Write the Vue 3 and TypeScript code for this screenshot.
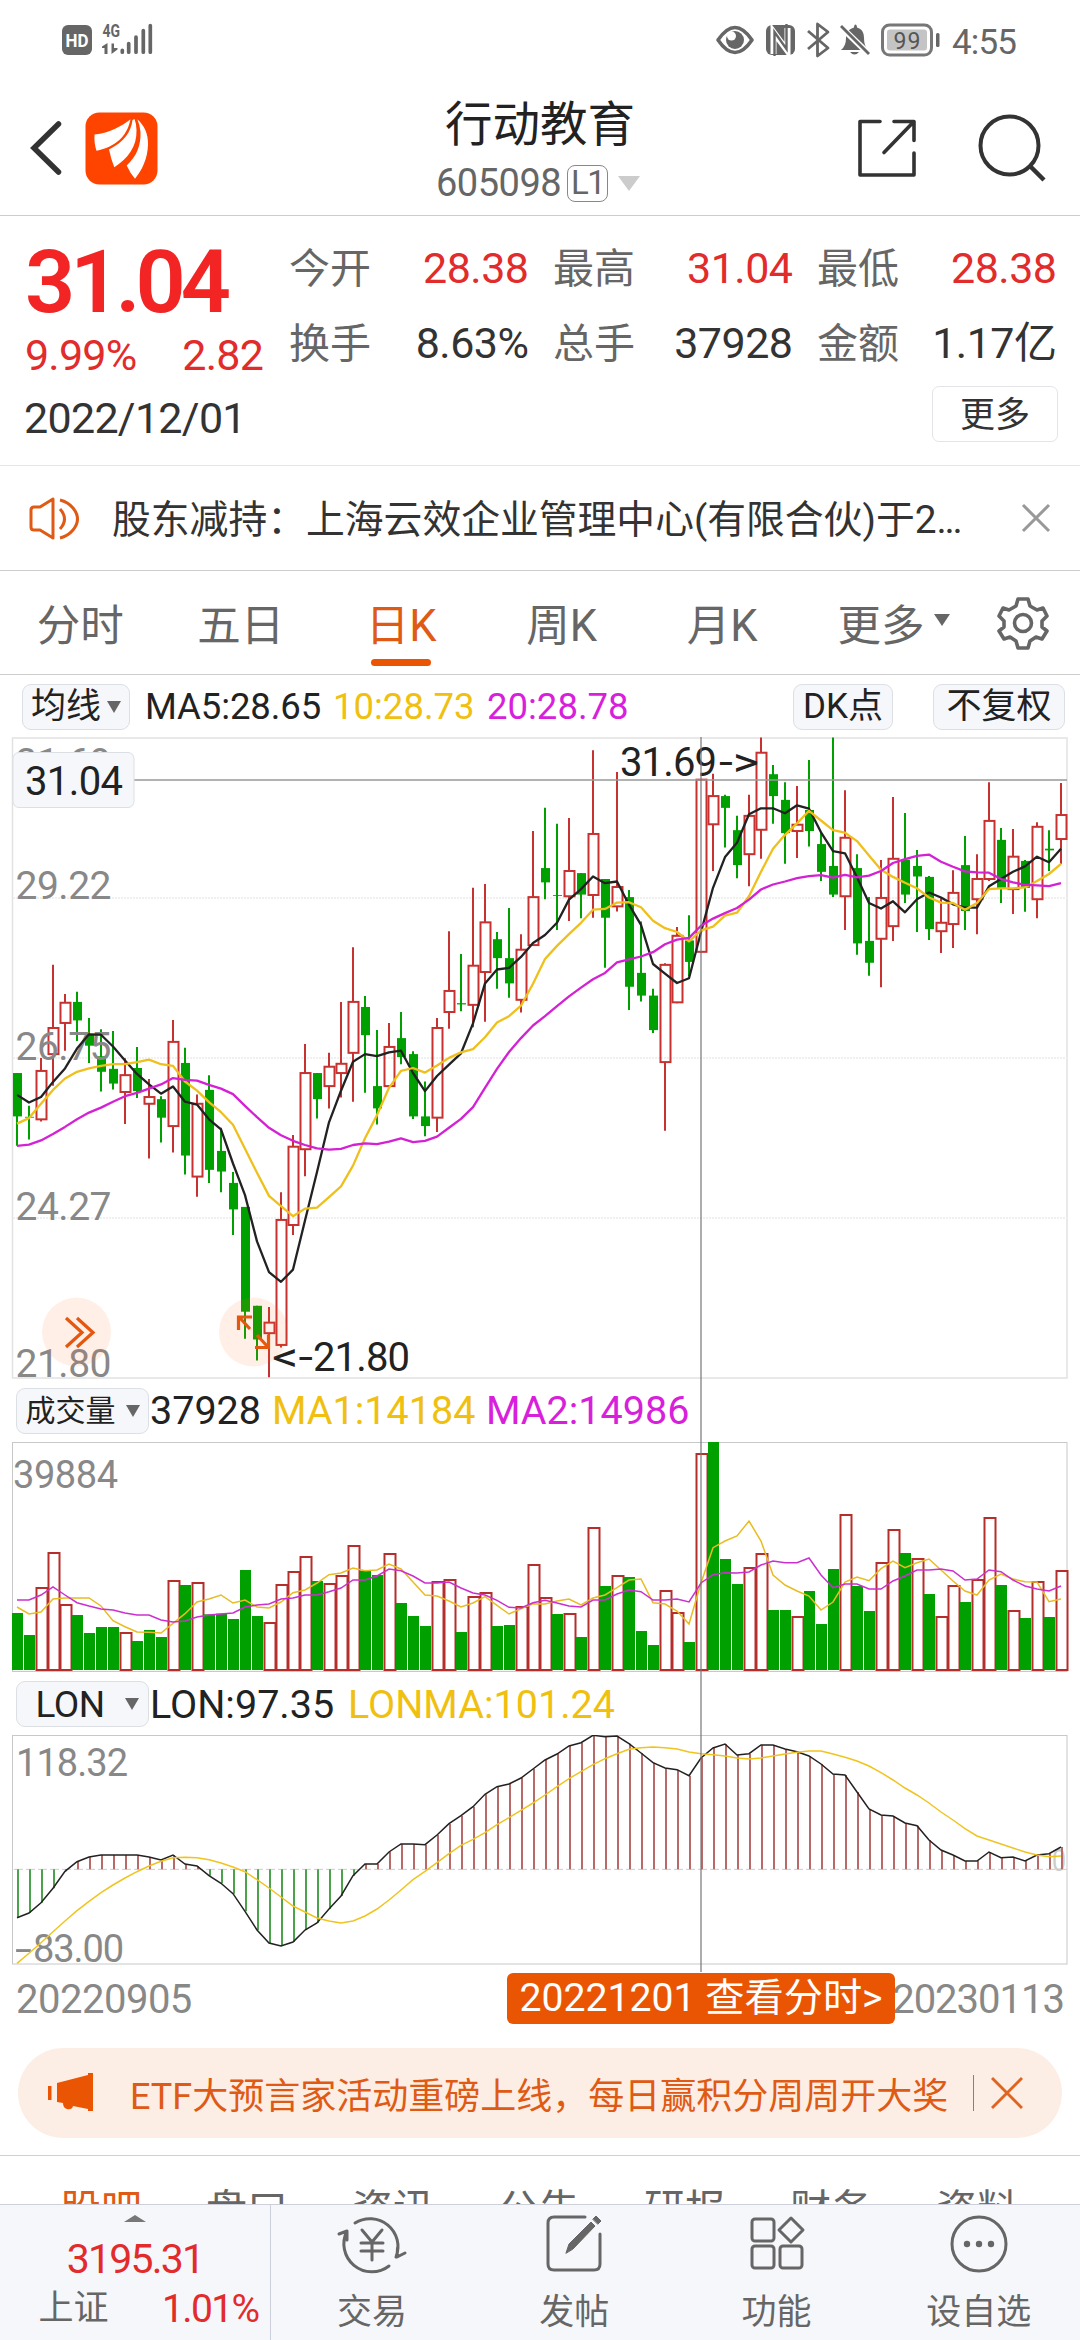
<script setup lang="ts">
interface Candle { up: boolean; x: number; top: number; bottom: number; high: number; low: number }
interface Bar { up: boolean; x: number; top: number }

const STEP = 12
const FIRST_X = 17
const xAt = (i: number) => FIRST_X + i * STEP

// Vertical scales of the panels: stored units -> px from the panel top
const priceY = (v: number) => v / 2.3758 - 7
const volumeY = (v: number) => v / 3 - 62
const lonY = (v: number) => v / 3 - 65

// direction, body top, body bottom, high, low
const rawCandles = `g 815 918 815 988|g 919 921 893 973|r 810 925 779 930|r 708 770 558 845|r 648 696 627 762|g 646 690 622 739|g 722 750 684 791|g 775 812 711 859|g 805 840 715 854|r 820 860 780 936|g 803 858 753 874|r 872 888 829 1018|g 877 921 870 980|r 741 941 689 1004|g 791 1011 755 1056|r 888 1061 866 1109|g 855 1045 820 1076|g 1000 1049 945 1098|g 1076 1139 1050 1200|g 1133 1382 1133 1446|g 1368 1448 1368 1498|r 1408 1433 1371 1538|r 1164 1461 1098 1467|r 990 1176 962 1200|r 815 996 746 1060|g 815 877 815 923|r 800 846 767 899|r 793 815 646 873|r 646 767 516 883|g 658 725 632 862|g 846 899 713 937|r 753 846 696 848|g 732 777 670 794|g 770 918 763 924|g 918 941 835 965|r 708 921 684 955|r 620 670 478 710|g 649 652 532 668|r 560 653 375 706|r 457 575 366 693|g 497 542 480 615|g 542 602 423 636|r 522 641 485 671|r 397 511 240 511|g 328 362 185 402|g 392 394 223 475|r 335 395 209 454|g 340 391 340 447|r 247 392 48 446|g 354 446 354 565|r 373 419 100 431|g 397 610 380 665|g 577 631 455 645|g 631 713 615 720|r 558 789 554 952|r 489 647 468 649|g 500 551 440 585|r 118 527 118 530|r 157 224 104 335|g 157 185 154 279|g 238 321 204 352|r 204 295 154 371|r 54 237 18 306|g 105 157 83 223|g 166 245 124 318|r 225 240 133 304|g 190 240 71 277|g 271 337 245 359|g 323 391 18 397|r 256 395 143 475|g 328 507 295 534|g 501 553 397 584|r 399 496 309 611|r 306 466 159 501|g 308 391 197 411|g 323 348 285 480|g 349 473 347 499|r 458 478 400 530|r 387 461 333 518|g 321 430 252 475|r 354 402 295 485|r 216 354 124 359|g 261 375 233 411|r 301 378 235 437|g 311 375 309 432|r 230 402 219 447|g 282 286 238 335|r 202 259 126 318`

const candles: Candle[] = rawCandles.split('|').map((row, i) => {
  const [dir, ...v] = row.split(' ')
  const [top, bottom, high, low] = v.map((n) => priceY(Number(n)))
  return { up: dir === 'r', x: xAt(i), top, bottom, high, low }
})

const rawVolume = 'g699 g765 r621 r516 r672 g705 g759 g741 g741 r756 g783 g750 g771 r600 g615 r606 g703 g701 g717 g570 g708 r726 r612 r573 r528 g603 r609 r585 r495 g572 g585 r519 g669 g708 g738 r603 r597 g756 r648 r636 g738 g735 r678 r552 r651 g702 r699 g771 r441 g618 r585 g591 g753 g795 r630 r696 g786 r219 g186 g537 g612 r561 r519 g690 g690 r708 g633 g732 g567 r402 g618 g693 r546 r447 g519 r534 g642 r708 r615 g666 r597 r411 g615 r690 g714 r603 g711 r570'
const volumes: Bar[] = rawVolume.split(' ').map((s, i) => ({ up: s[0] === 'r', x: xAt(i), top: volumeY(Number(s.slice(1))) }))

const line = (values: number[], y: (v: number) => number) =>
  values.map((v, i) => `${xAt(i)},${y(v).toFixed(1)}`).join(' ')

const ma5 = line([867,885,872,836,804,757,723,724,752,785,817,842,864,847,883,890,925,949,1030,1105,1215,1288,1311,1282,1165,1050,932,857,788,770,775,766,762,815,858,822,795,768,697,602,569,565,539,506,487,458,403,378,348,364,360,415,463,556,579,601,590,480,375,302,268,200,186,186,198,179,187,243,288,293,350,411,424,407,433,402,386,398,414,422,422,371,354,337,324,301,314,282], priceY)
const ma10 = line([935,922,888,855,828,812,804,798,794,794,789,783,794,798,835,857,884,908,938,995,1052,1107,1131,1155,1137,1135,1110,1084,1035,970,915,850,810,803,814,797,779,766,758,730,695,680,655,603,544,513,485,458,427,425,410,409,421,453,471,480,502,476,467,441,434,395,337,282,249,222,192,215,238,244,264,298,332,349,363,376,398,410,411,427,411,378,376,376,374,359,342,318], priceY)
const ma20 = line([988,985,975,960,943,925,909,897,883,870,862,852,842,827,831,833,843,852,865,893,920,945,963,976,986,994,997,995,986,982,984,978,970,979,976,966,945,924,896,850,805,765,732,702,680,656,633,612,592,577,552,545,538,528,509,498,494,465,448,435,423,403,379,367,360,352,347,345,351,344,350,346,335,316,307,299,296,313,325,336,338,339,354,362,368,369,371,364], priceY)

const volMa1 = line([681,702,696,657,654,654,654,678,722,740,756,757,759,730,701,666,657,645,669,660,681,684,666,638,630,609,584,579,564,572,570,552,567,606,645,648,663,681,669,650,676,702,686,671,672,663,657,675,654,645,623,600,597,668,672,693,732,609,503,483,468,423,483,585,615,633,648,690,666,606,591,602,566,543,563,548,537,570,603,633,645,600,582,597,605,606,665,657], volumeY)
const volMa2 = line([660,660,645,621,645,668,678,687,690,699,705,705,720,726,723,711,705,702,699,681,675,672,657,654,645,645,635,624,600,600,588,567,572,588,609,609,606,624,639,645,661,682,684,668,661,669,678,681,660,660,642,630,635,660,660,657,666,609,584,578,579,576,555,543,548,548,534,585,623,612,612,627,627,603,588,570,570,567,573,600,597,570,575,600,618,627,633,618], volumeY)

const lonValues = [743,729,698,655,604,575,561,555,555,555,555,561,570,555,582,588,617,640,671,724,780,819,828,816,780,759,717,678,617,582,582,546,522,522,524,495,461,437,410,373,350,342,324,297,270,252,228,218,196,200,198,221,249,278,294,299,317,264,234,222,255,251,225,225,237,245,258,282,312,315,366,417,435,438,459,467,510,540,555,573,573,546,563,561,573,555,551,531]
const lon = line(lonValues, lonY)
const lonBars: Bar[] = lonValues.map((v, i) => ({ up: v < 598, x: xAt(i) + 1, top: lonY(v) }))
const lonMa = line([880,850,818,785,753,722,694,668,645,624,605,588,574,563,562,563,569,579,591,605,629,654,681,708,726,744,753,759,753,738,717,690,660,629,604,578,551,526,508,488,464,443,421,399,375,350,326,305,284,266,251,238,233,231,233,237,246,251,254,258,264,267,264,258,252,247,243,243,252,262,273,288,308,330,354,375,399,426,450,476,498,510,522,534,546,555,560,558], lonY)
const zero = lonY(598)

const quotes = [
  { label: '今开', value: '28.38', red: true },
  { label: '最高', value: '31.04', red: true },
  { label: '最低', value: '28.38', red: true },
  { label: '换手', value: '8.63%', red: false },
  { label: '总手', value: '37928', red: false },
  { label: '金额', value: '1.17亿', red: false },
]
const periods = ['分时', '五日', '日K', '周K', '月K']
const sections = ['股吧', '盘口', '资讯', '公告', '研报', '财务', '资料']
const priceLabels = [
  { text: '31.69', y: 39 },
  { text: '29.22', y: 162 },
  { text: '26.75', y: 323 },
  { text: '24.27', y: 483 },
  { text: '21.80', y: 639.5 },
]
</script>

<template>
  <div class="screen">
    <div class="status">
      <svg class="status-left" width="100" height="36" viewBox="60 23 100 36">
        <rect x="62" y="26" width="30" height="30" rx="6" fill="#666" />
        <text x="77" y="48" text-anchor="middle" font-size="18" font-weight="700" fill="#fff" textLength="23" lengthAdjust="spacingAndGlyphs">HD</text>
        <text x="102.500" y="38" font-size="18" font-weight="700" fill="#666" textLength="17.500" lengthAdjust="spacingAndGlyphs">4G</text>
        <path d="M107.500 44v11h-3v-6h-2.500v-1.500zM111.500 44.500h2.500v4.500h3.500v1.500l-6 4.500z" fill="#666" />
        <path d="M122.300 53.200v-1.900M128.700 53.200V44.500M136 53.200V38M143.300 53.200V31.500M150.300 53.200V26.500" stroke="#666" stroke-width="3.700" stroke-linecap="round" />
      </svg>
      <svg class="status-right" width="310" height="38" viewBox="714 22 310 38">
        <path d="M718 40q17-25 34 0q-17 25-34 0z" fill="none" stroke="#666" stroke-width="3.600" stroke-linejoin="round" />
        <circle cx="735" cy="40" r="9" fill="#666" /><circle cx="731.500" cy="36" r="4.500" fill="#fff" />
        <rect x="766" y="25" width="29" height="30" rx="6" fill="#666" />
        <path d="M773.500 54V32l14 19V28" fill="none" stroke="#fff" stroke-width="6" />
        <path d="M774.500 56V32l12 17V24" fill="none" stroke="#666" stroke-width="2.400" />
        <path d="M808 31l20 17-10.500 8V24l10.500 8-20 17" fill="none" stroke="#666" stroke-width="2.800" stroke-linejoin="round" />
        <path d="M841 50q5-4 5-12c0-6 3-9 8-10.500 0-4 3-4 3 0 5 1.500 7 5 7 10.500q0 8 4 12zM850 52h9q-4.500 5-9 0z" fill="#666" />
        <path d="M841 27l28 27" stroke="#fff" stroke-width="6" /><path d="M841 26l28 28" stroke="#666" stroke-width="2.800" />
        <rect x="882.500" y="25" width="49" height="30" rx="7" fill="none" stroke="#777" stroke-width="3" />
        <rect x="887" y="29.500" width="40" height="21" rx="3" fill="#c4c4c4" />
        <rect x="936" y="33" width="3.500" height="14" rx="1.500" fill="#666" />
        <text x="907" y="48.500" text-anchor="middle" font-size="23" fill="#555" textLength="27">99</text>
        <text x="952" y="54" font-size="35" fill="#666" textLength="65">4:55</text>
      </svg>
    </div>

    <header class="header">
      <svg class="brand" width="142" height="76" viewBox="18 110 142 76">
        <path d="M58.500 124L34 148l24.500 24" fill="none" stroke="#333" stroke-width="5.500" stroke-linecap="round" />
        <rect x="85.500" y="112.500" width="72" height="72" rx="14" fill="#ff4400" />
        <path d="M94.500 134.500C110 133 122 126 130.500 119.300C127 137 115 147 96.500 150.700Q94 144 94.500 134.500z" fill="#fff" />
        <path d="M132.500 120C131 132 124 142 109 149.500Q111 159 114.300 167.300C128 158 137 147 136.500 130Q136.500 124 134.500 119z" fill="#fff" />
        <path d="M137.300 119.300C144 125 148.500 134 148 145C147.500 159 142 170 135 178.700Q130 173 126.700 165.500C137 156 141 145 140.500 132Q140 125 137.300 119.300z" fill="#fff" />
      </svg>
      <div class="title">
        <div class="name">行动教育</div>
        <div class="code"><span>605098</span><span class="level">L1</span><i class="tri code-tri"></i></div>
      </div>
      <svg class="tools" width="194" height="72" viewBox="856 112 194 72">
        <path d="M880 121.500H860v53.500h54v-22M894 121.500h20v19M913 122.500l-29 30" fill="none" stroke="#333" stroke-width="3.600" stroke-linejoin="round" stroke-linecap="round" />
        <circle cx="1009.500" cy="145.500" r="29" fill="none" stroke="#333" stroke-width="4" />
        <path d="M1030 166l14 14" stroke="#333" stroke-width="4.500" />
      </svg>
    </header>

    <section class="quote">
      <div class="price-col">
        <div class="price">31.04</div>
        <div class="change"><span>9.99%</span><span>2.82</span></div>
      </div>
      <div class="quote-grid">
        <div v-for="q in quotes" :key="q.label" class="cell">
          <span class="label">{{ q.label }}</span><span class="value" :class="{ red: q.red }">{{ q.value }}</span>
        </div>
      </div>
      <div class="date-row"><span>2022/12/01</span><button class="more">更多</button></div>
    </section>

    <section class="notice">
      <svg width="52" height="46" viewBox="28 494 52 46" fill="none" stroke="#df5a14" stroke-width="3">
        <path d="M53 498v39l-13-8h-6q-3 0-3-3v-17q0-3 3-3h6z" stroke-linejoin="round" />
        <path d="M60 508q9 10 0 20M60 499q8 2 13 8 9 11 0 22-5 6-13 8" />
      </svg>
      <p>股东减持：上海云效企业管理中心(有限合伙)于2<span>...</span></p>
      <svg width="30" height="30" viewBox="0 0 30 30"><path d="M2 2l26 26M28 2L2 28" stroke="#999" stroke-width="3" /></svg>
    </section>

    <nav class="periods">
      <span v-for="p in periods" :key="p" class="period" :class="{ active: p === '日K' }">{{ p }}</span>
      <span class="period-more">更多<i class="tri"></i></span>
      <svg width="54" height="54" viewBox="-27 -27 54 54" fill="none" stroke="#666" stroke-width="3.600" stroke-linejoin="round">
        <path d="M-5-24H5L7-17L14-13L20-15L24-7L19-2V4L24 8L19 16L13 14L7 18L5 25H-5L-7 18L-13 14L-19 16L-24 8L-19 4V-2L-24-7L-20-15L-14-13L-7-17Z" />
        <circle r="8.500" />
      </svg>
    </nav>

    <section class="charts">
      <div class="legend main-legend">
        <button class="chip avg">均线<i class="tri"></i></button>
        <span class="ink ma5">MA5:28.65</span><span class="gold ma10">10:28.73</span><span class="pink">20:28.78</span>
        <button class="chip dk">DK点</button><button class="chip">不复权</button>
      </div>
      <svg class="panel" width="1080" height="642" viewBox="0 0 1080 642">
        <rect x="12.500" y="1" width="1054.500" height="640" fill="none" stroke="#e2e2e2" stroke-width="1.500" />
        <path d="M13 161H1067M13 321H1067M13 481H1067" stroke="#ececec" stroke-width="1.500" stroke-dasharray="2 1" />
        <g v-for="c in candles" :key="c.x">
          <template v-if="c.up">
            <path :d="`M${c.x} ${c.high}V${c.top}M${c.x} ${c.bottom}V${c.low}`" class="up" />
            <rect :x="c.x - 4.500" :y="c.top" width="10" :height="c.bottom - c.top" class="up" />
          </template>
          <template v-else>
            <path :d="`M${c.x} ${c.high}V${c.low}`" class="down" />
            <rect :x="c.x - 4" :y="c.top" width="9" :height="c.bottom - c.top" fill="#00a000" />
          </template>
        </g>
        <g font-size="39" fill="#888">
          <text v-for="p in priceLabels" :key="p.text" x="15.500" :y="p.y" textLength="96">{{ p.text }}</text>
        </g>
        <g fill="none" stroke-width="2.300" stroke-linejoin="round">
          <polyline :points="ma5" stroke="#222" />
          <polyline :points="ma10" stroke="#efc01c" />
          <polyline :points="ma20" stroke="#d321d3" />
        </g>
        <path d="M134 43H1067" stroke="#999" stroke-width="1.600" />
        <rect x="13" y="15.500" width="121" height="55" rx="6" fill="#f6f7fa" stroke="#dcdfe3" />
        <g font-size="40" fill="#222">
          <text x="25" y="57.500" textLength="98">31.04</text>
          <text x="620" y="38.500" textLength="97">31.69</text><text x="719" y="38.500" textLength="40" lengthAdjust="spacingAndGlyphs">-&gt;</text>
          <text x="272" y="634" textLength="41" lengthAdjust="spacingAndGlyphs">&lt;-</text><text x="313" y="634" textLength="97">21.80</text>
        </g>
        <g fill="#ff6a1f" fill-opacity=".11"><circle cx="76.500" cy="595" r="34.500" /><circle cx="253.500" cy="595" r="34.500" /></g>
        <path d="M66 581l16 14.500L66 610M77 581l16 14.500L77 610M252 580h-13.500v13M240 581l10 11M255 610.500h13.500v-13M267 609l-10-11" fill="none" stroke="#e5560f" stroke-width="3.200" />
      </svg>

      <div class="legend">
        <button class="chip sub">成交量<i class="tri"></i></button>
        <span class="ink vol">37928</span><span class="gold vol-ma">MA1:14184</span><span class="pink vol-ma">MA2:14986</span>
      </div>
      <svg class="panel" width="1080" height="231" viewBox="0 0 1080 231">
        <rect x="12.500" y=".500" width="1054.500" height="229" fill="none" stroke="#c8c8c8" />
        <template v-for="v in volumes" :key="v.x">
          <rect v-if="v.up" :x="v.x - 4.500" :y="v.top + 1" width="11" :height="227 - v.top" fill="#fff" stroke="#b42e2c" stroke-width="2" />
          <rect v-else :x="v.x - 5" :y="v.top" width="11" :height="228 - v.top" fill="#00a000" />
        </template>
        <text x="13" y="45.500" font-size="38" fill="#888" textLength="105">39884</text>
        <polyline :points="volMa1" fill="none" stroke="#e9bc22" stroke-width="1.500" />
        <polyline :points="volMa2" fill="none" stroke="#cb30cf" stroke-width="1.500" />
      </svg>

      <div class="legend lon-legend">
        <button class="chip sub lon-chip">LON<i class="tri"></i></button>
        <span class="ink lon">LON:97.35</span><span class="gold lon-ma">LONMA:101.24</span>
      </div>
      <svg class="panel" width="1080" height="230" viewBox="0 0 1080 230">
        <rect x="12.500" y=".500" width="1054.500" height="228.500" fill="none" stroke="#c8c8c8" />
        <path :d="`M14 ${zero}H1067`" stroke="#ccc" stroke-dasharray="9 3" />
        <text x="1052" y="136" font-size="32" fill="#ccc" textLength="14" lengthAdjust="spacingAndGlyphs">0</text>
        <path v-for="b in lonBars" :key="b.x" :d="`M${b.x} ${zero}V${b.top}`" :stroke="b.up ? '#b76a68' : '#4ca34c'" stroke-width="2" />
        <g font-size="38" fill="#888"><text x="16" y="41" textLength="112">118.32</text><text x="15" y="227" textLength="17" lengthAdjust="spacingAndGlyphs">-</text><text x="33" y="227" textLength="91">83.00</text></g>
        <polyline :points="lon" fill="none" stroke="#222" stroke-width="1.500" />
        <polyline :points="lonMa" fill="none" stroke="#f0c41f" stroke-width="1.500" />
      </svg>
      <div class="dates"><span>20220905</span><span class="end">20230113</span><b>20221201 查看分时&gt;</b></div>
      <i class="crosshair"></i>
    </section>

    <div class="banner">
      <svg width="46" height="40" viewBox="48 2073 46 40" fill="#ea5504">
        <path d="M48 2086h3.500v14H48zM57 2083l31-8v-2h5v38h-5v-2l-15-3q-1 4-6 3-4-1-4-6l-6-1z" />
      </svg>
      <p>ETF大预言家活动重磅上线，每日赢积分周周开大奖</p>
      <i></i>
      <svg width="32" height="34" viewBox="0 0 32 34"><path d="M1 2l30 30M31 2L1 32" stroke="#df6420" stroke-width="3" /></svg>
    </div>

    <nav class="sections"><span v-for="s in sections" :key="s" :class="{ active: s === '股吧' }">{{ s }}</span></nav>

    <footer class="dock">
      <div class="index">
        <i></i>
        <strong>3195.31</strong>
        <div><span>上证</span><em>1.01%</em></div>
      </div>
      <div class="action">
        <svg viewBox="-32 -32 64 64">
          <path d="M-17-21A28 28 0 0 1 24 13M17 22A28 28 0 0 1-25-13M-33-10l8-3v9M33 9l-8 4 .5-9M-10-14L0-2L10-14M0-2V16M-11-1H11M-11 7H11" />
        </svg><span>交易</span>
      </div>
      <div class="action">
        <svg viewBox="-32 -32 64 64">
          <path d="M11-27H-20q-6 0-6 6V20q0 6 6 6H20q6 0 6-6V-10" />
          <path d="M-8 9L-5 0L17-22l4 4L-1 5ZM19-25l3-3 5 5-3 3z" fill="#666" stroke-width="1" />
        </svg><span>发帖</span>
      </div>
      <div class="action">
        <svg viewBox="-32 -32 64 64">
          <rect x="-25" y="-25" width="22" height="22" rx="3" /><rect x="-25" y="2" width="22" height="22" rx="3" /><rect x="3" y="2" width="22" height="22" rx="3" />
          <path d="M14-26L26-14L14-2L2-14Z" />
        </svg><span>功能</span>
      </div>
      <div class="action">
        <svg viewBox="-32 -32 64 64"><circle r="27" /><g fill="#666" stroke="none"><circle cx="-12" r="3.200" /><circle r="3.200" /><circle cx="12" r="3.200" /></g></svg><span>设自选</span>
      </div>
    </footer>
  </div>
</template>

<style>
body { margin: 0; background: #fff; }
</style>

<style scoped>
.screen { width: 1080px; height: 2340px; overflow: hidden; display: flex; flex-direction: column; background: #fff; color: #333; font-family: Roboto, "Noto Sans CJK SC", sans-serif; }
.screen > * { flex: none; box-sizing: border-box; }
svg { display: block; flex: none; }
p { margin: 0; }
button { box-sizing: border-box; margin: 0; padding: 0; font: inherit; color: inherit; line-height: 1; }
.tri { display: inline-block; border-left: 7px solid transparent; border-right: 7px solid transparent; border-top: 12px solid #666; }

.status { height: 80px; display: flex; justify-content: space-between; padding: 22px 56px 0 60px; }
.header { height: 136px; border-bottom: 1px solid #ccc; display: flex; position: relative; justify-content: space-between; padding: 30px 30px 0 18px; }
.tools { margin-top: 2px; }
.title { position: absolute; left: 0; right: 0; top: 17px; }
.name { font-size: 47.500px; line-height: 56px; text-align: center; color: #222; }
.code { display: flex; align-items: center; margin: 10px 0 0 436px; height: 40px; font-size: 38px; letter-spacing: -.5px; color: #666; }
.level { box-sizing: border-box; width: 41px; height: 37px; margin-left: 6px; border: 1.500px solid #888; border-radius: 8px; font-size: 33px; line-height: 34px; text-align: center; letter-spacing: -1.500px; }
.code-tri { margin-left: 10px; border-left-width: 11px; border-right-width: 11px; border-top: 15px solid #ccc; }

.quote { height: 250px; border-bottom: 1px solid #e6e6e6; display: grid; grid-template: 168px 80px / 289px 1fr; }
.price-col { padding-left: 25px; }
.price { margin-top: 22px; font-size: 88px; line-height: 88px; font-weight: 600; letter-spacing: -5px; color: #f22424; }
.change { display: flex; justify-content: space-between; width: 238px; margin-top: 4px; font-size: 43px; line-height: 50px; letter-spacing: -.8px; color: #e22b2b; }
.quote-grid { display: grid; grid-template: 75px 75px / repeat(3, 239.500px); column-gap: 24.500px; padding-top: 14px; }
.cell { display: flex; align-items: center; justify-content: space-between; line-height: 60px; }
.label { font-size: 41px; margin-top: 2px; color: #666; }
.value { font-size: 43px; letter-spacing: -.5px; }
.red { color: #e22b2b; }
.date-row { grid-column: 1 / 3; display: flex; justify-content: space-between; padding: 1px 22px 0 24px; font-size: 43px; line-height: 66px; letter-spacing: -.7px; }
.more { width: 126px; height: 56px; margin-top: 1px; padding-top: 3px; border: 1.500px solid #e2e4e7; border-radius: 7px; background: #fff; font-size: 35px; letter-spacing: 0; }

.notice { height: 105px; border-bottom: 1px solid #ccc; display: flex; align-items: center; padding: 0 29px 0 28px; }
.notice p { width: 910px; margin: -4px 0 0 32px; font-size: 38.800px; white-space: nowrap; }
.notice p span { letter-spacing: -2.200px; }

.periods { height: 104px; border-bottom: 1px solid #ccc; display: flex; align-items: center; color: #666; font-size: 43.500px; }
.period { width: 160.500px; text-align: center; position: relative; padding-top: 7px; line-height: 99px; }
.period.active { color: #df5a14; }
.period.active::after { content: ""; position: absolute; left: 50px; bottom: 10px; width: 60px; height: 7px; border-radius: 4px; background: #ea5504; }
.period-more { display: flex; align-items: center; width: 158px; margin-left: 35px; }
.period-more .tri { margin: -6px 0 0 9px; border-left-width: 8px; border-right-width: 8px; }

.charts { position: relative; }
.legend { display: flex; align-items: center; height: 63px; padding-left: 16px; font-size: 39.500px; white-space: nowrap; }
.lon-legend { height: 62px; }
.main-legend { height: 62px; padding: 1px 15px 0 22px; box-sizing: border-box; font-size: 36.500px; }
.main-legend .pink { margin-right: auto; }
.ink { color: #222; } .gold { color: #f0c010; } .pink { color: #d81fdc; }
.chip { display: flex; align-items: center; justify-content: center; height: 46px; border: 1px solid #dcdfe3; border-radius: 9px; background: #f6f7fa; color: #222; font-size: 35px; white-space: nowrap; }
.chip .tri { margin-left: 6px; }
.avg { width: 108px; }
.dk { width: 100px; margin-right: 40px; }
.chip:last-child { width: 132px; }
.sub { width: 133px; font-size: 30px; }
.sub .tri { margin-left: 10px; }
.lon-chip { font-size: 37px; letter-spacing: -.5px; padding-left: 9px; }
.lon-chip .tri { margin-left: 20px; }
.ma5 { margin-left: 15px; width: 188px; letter-spacing: -.1px; } .ma10 { width: 154px; }
.vol { margin-left: 1px; width: 122px; } .vol-ma { width: 214px; }
.lon { margin-left: 1px; width: 198px; }
.up { fill: none; stroke: #c63230; stroke-width: 2; }
.down { stroke: #00a000; stroke-width: 2; }
.panel text, .status text { font-family: Roboto, "Noto Sans CJK SC", sans-serif; }
.dates { display: flex; position: relative; justify-content: space-between; height: 68px; padding: 0 16px; font-size: 40px; line-height: 69px; letter-spacing: -.5px; color: #888; }
.dates .end { letter-spacing: -1px; }
.dates b { position: absolute; left: 507px; top: 8px; width: 388px; height: 51px; border-radius: 6px; background: #ea5504; color: #fff; font-weight: 400; font-size: 39.200px; line-height: 51px; letter-spacing: 0; text-align: center; white-space: nowrap; }
.crosshair { position: absolute; left: 700px; top: 62px; width: 2px; height: 1235px; background: #777; opacity: .6; }

.banner { width: 1044px; height: 90px; margin: 15px 18px 17px; border-radius: 45px; background: #fceee4; display: flex; align-items: center; padding-left: 30px; color: #df5a14; }
.banner p { width: 843px; margin-left: 36px; font-size: 36px; white-space: nowrap; }
.banner i { width: 1px; height: 36px; margin-right: 17px; background: #df6420; }

.sections { height: 49px; overflow: hidden; border-top: 1px solid #d0d0d4; display: flex; padding: 24px 0 0 28px; color: #666; font-size: 41px; line-height: 60px; }
.sections span { width: 146px; text-align: center; }
.sections .active { color: #df5a14; }

.dock { height: 136px; border-top: 1px solid #cdd0da; background: #f6f7fa; display: flex; color: #666; }
.index { box-sizing: border-box; width: 271px; border-right: 1px solid #cdd0da; display: flex; flex-direction: column; align-items: center; color: #e22b2b; }
.index i { margin-top: 10px; border-left: 11px solid transparent; border-right: 11px solid transparent; border-bottom: 7px solid #777; }
.index strong { margin-top: 12px; font-weight: 400; font-size: 41px; line-height: 50px; letter-spacing: -1.800px; }
.index div { display: flex; align-items: center; justify-content: space-between; width: 220px; margin-left: 27px; font-size: 35px; line-height: 50px; }
.index span { color: #666; }
.index em { font-style: normal; font-size: 39px; letter-spacing: -1.600px; }
.action { flex: 1; display: flex; flex-direction: column; align-items: center; font-size: 35px; line-height: 50px; }
.action svg { width: 64px; height: 64px; margin: 7px 0 12px; overflow: visible; fill: none; stroke: #666; stroke-width: 3; stroke-linecap: round; stroke-linejoin: round; }
</style>
